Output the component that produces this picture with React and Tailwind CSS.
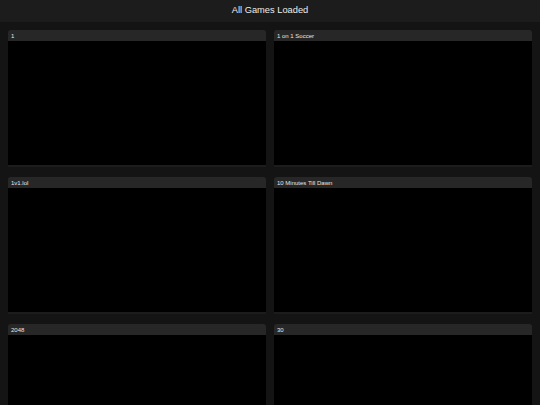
import React from "react";

const games = ["1", "1 on 1 Soccer", "1v1.lol", "10 Minutes Till Dawn", "2048", "30"];

export default function App() {
  return (
    <div className="min-h-screen bg-[#141414] text-[#e6e6e6]" style={{ fontFamily: '"Liberation Sans", Arial, sans-serif' }}>
      <div className="h-[22px] bg-[#1c1c1c] flex items-center justify-center text-[9.3px] text-[#ececec]">
        All Games Loaded
      </div>
      <div className="grid grid-cols-2 gap-x-2 gap-y-[10px] p-2">
        {games.map((g) => (
          <div key={g} className="flex flex-col bg-[#1c1c1c] rounded-t-[3px] pb-[2px]">
            <div className="h-[11px] bg-[#272727] rounded-t-[3px] flex items-center px-[3px] text-[6px] leading-none text-[#e6e6e6]">
              {g}
            </div>
            <div className="h-[124px] bg-black" />
          </div>
        ))}
      </div>
    </div>
  );
}
